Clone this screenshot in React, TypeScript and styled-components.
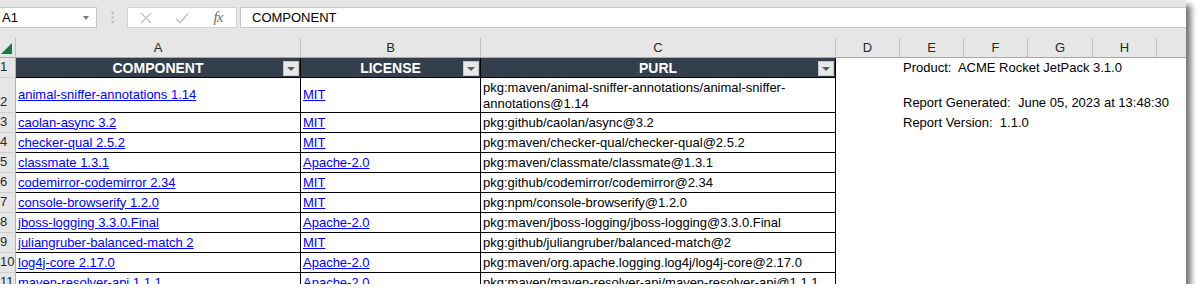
import styled, { createGlobalStyle } from "styled-components";

const GlobalStyle = createGlobalStyle`
  body {
    margin: 0;
    background: #fff;
    font-family: "Liberation Sans", Arial, sans-serif;
  }
`;

const Window = styled.div`
  width: 1186px;
  height: 284px;
  overflow: hidden;
  background: #fff;
  box-shadow: 5px 5px 6px rgba(0, 0, 0, 0.55);
  font-family: "Liberation Sans", Arial, sans-serif;
  font-size: 13px;
  color: #000;
`;

const FormulaBar = styled.div`
  display: flex;
  align-items: flex-start;
  height: 38px;
  box-sizing: border-box;
  padding-top: 7px;
  background: #e6e6e6;
`;

const NameBox = styled.div`
  display: flex;
  align-items: center;
  justify-content: space-between;
  box-sizing: border-box;
  width: 97px;
  height: 21px;
  padding: 0 7px 0 2px;
  background: #fff;
  border: 1px solid #c6c6c6;
  border-left: none;
`;

const DropArrow = styled.span`
  width: 0;
  height: 0;
  border-left: 3.5px solid transparent;
  border-right: 3.5px solid transparent;
  border-top: 4px solid #7a7a7a;
`;

const Grip = styled.div`
  display: flex;
  justify-content: center;
  align-items: center;
  width: 30px;
  height: 21px;
`;

const EditBox = styled.div`
  display: flex;
  box-sizing: border-box;
  width: 110px;
  height: 21px;
  background: #fff;
  border: 1px solid #d2d2d2;
`;

const EditSlot = styled.span`
  flex: 1;
  display: flex;
  align-items: center;
  justify-content: center;
`;

const Fx = styled.span`
  font-family: "Liberation Serif", "Times New Roman", serif;
  font-style: italic;
  font-size: 15px;
  color: #6e6e6e;
  letter-spacing: -1px;
`;

const FormulaInput = styled.div`
  flex: 1;
  display: flex;
  align-items: center;
  box-sizing: border-box;
  height: 21px;
  margin-left: 3px;
  padding-left: 11px;
  background: #fff;
  border: 1px solid #c6c6c6;
  border-right: none;
`;

const Sheet = styled.div`
  display: grid;
  grid-template-columns: 16px 285px 180px 355px 64px 64px 64px 65px 64px 64px;
  grid-template-rows: 20px 20px 35px repeat(9, 20px);
`;

const Corner = styled.div`
  display: flex;
  justify-content: flex-end;
  align-items: flex-end;
  padding: 0 3px 3px 0;
  background: #e6e6e6;
  border-right: 1px solid #c0c0c0;
  border-bottom: 1px solid #a8a8a8;
`;

const Triangle = styled.span`
  width: 0;
  height: 0;
  border-left: 11px solid transparent;
  border-bottom: 11px solid #217346;
`;

const ColHead = styled.div`
  display: flex;
  align-items: center;
  justify-content: center;
  background: #e6e6e6;
  color: #262626;
  border-right: 1px solid #c0c0c0;
  border-bottom: 1px solid #a8a8a8;
`;

const RowNum = styled.div`
  display: flex;
  align-items: flex-end;
  padding-bottom: 2px;
  line-height: 16px;
  background: #e6e6e6;
  color: #262626;
  border-right: 1px solid #b0b0b0;
  border-bottom: 1px solid #cfcfcf;
  overflow: hidden;
`;

const HeadCell = styled.div`
  display: grid;
  grid-template-columns: 17px 1fr 17px;
  align-items: center;
  background: #333f4c;
  color: #fff;
  font-weight: bold;
  font-size: 14px;
  border-right: 1px solid #000;
  border-bottom: 1px solid #000;
`;

const HeadLabel = styled.span`
  grid-column: 2;
  text-align: center;
  white-space: nowrap;
`;

const FilterButton = styled.span`
  grid-column: 3;
  align-self: end;
  display: flex;
  align-items: center;
  justify-content: center;
  box-sizing: border-box;
  width: 16px;
  height: 15px;
  margin-bottom: 1px;
  background: #e8e8e8;
  border: 1px solid #c4c4c4;

  &::after {
    content: "";
    border-left: 4px solid transparent;
    border-right: 4px solid transparent;
    border-top: 4px solid #5a5a5a;
  }
`;

const Cell = styled.div`
  display: flex;
  align-items: center;
  padding: 0 3px 0 2px;
  line-height: 16px;
  border-right: 1px solid #000;
  border-bottom: 1px solid #000;
  overflow: hidden;
  white-space: nowrap;
`;

const WrapCell = styled(Cell)`
  white-space: normal;
  padding-top: 1px;
`;

const Link = styled.a`
  color: #0000ff;
  text-decoration: underline;
`;

const Blank = styled.div``;

const Info = styled.div`
  display: flex;
  align-items: flex-end;
  padding: 0 0 2px 3px;
  line-height: 16px;
  white-space: pre;
  position: relative;
  z-index: 1;
`;

type Row = { name: string; license: string; purl: string };

const rows: Row[] = [
  {
    name: "animal-sniffer-annotations 1.14",
    license: "MIT",
    purl: "pkg:maven/animal-sniffer-annotations/animal-sniffer-annotations@1.14",
  },
  { name: "caolan-async 3.2", license: "MIT", purl: "pkg:github/caolan/async@3.2" },
  { name: "checker-qual 2.5.2", license: "MIT", purl: "pkg:maven/checker-qual/checker-qual@2.5.2" },
  { name: "classmate 1.3.1", license: "Apache-2.0", purl: "pkg:maven/classmate/classmate@1.3.1" },
  { name: "codemirror-codemirror 2.34", license: "MIT", purl: "pkg:github/codemirror/codemirror@2.34" },
  { name: "console-browserify 1.2.0", license: "MIT", purl: "pkg:npm/console-browserify@1.2.0" },
  {
    name: "jboss-logging 3.3.0.Final",
    license: "Apache-2.0",
    purl: "pkg:maven/jboss-logging/jboss-logging@3.3.0.Final",
  },
  {
    name: "juliangruber-balanced-match 2",
    license: "MIT",
    purl: "pkg:github/juliangruber/balanced-match@2",
  },
  {
    name: "log4j-core 2.17.0",
    license: "Apache-2.0",
    purl: "pkg:maven/org.apache.logging.log4j/log4j-core@2.17.0",
  },
  {
    name: "maven-resolver-api 1.1.1",
    license: "Apache-2.0",
    purl: "pkg:maven/maven-resolver-api/maven-resolver-api@1.1.1",
  },
];

// text that spills from column E over the empty columns to its right
const info: Record<number, string> = {
  1: "Product:  ACME Rocket JetPack 3.1.0",
  2: "Report Generated:  June 05, 2023 at 13:48:30",
  3: "Report Version:  1.1.0",
};

// column I is only partly in view, its letter falls outside the window
const letters = ["A", "B", "C", "D", "E", "F", "G", "H", ""];

function SideCells({ row }: { row: number }) {
  return (
    <>
      <Blank />
      {info[row] ? <Info>{info[row]}</Info> : <Blank />}
      <Blank />
      <Blank />
      <Blank />
      <Blank />
    </>
  );
}

export default function App() {
  return (
    <>
      <GlobalStyle />
      <Window>
        <FormulaBar>
          <NameBox>
            A1
            <DropArrow />
          </NameBox>
          <Grip>
            <svg width="3" height="11" viewBox="0 0 3 11">
              <rect x="0.5" y="0" width="2" height="2" fill="#b4b4b4" />
              <rect x="0.5" y="4.5" width="2" height="2" fill="#b4b4b4" />
              <rect x="0.5" y="9" width="2" height="2" fill="#b4b4b4" />
            </svg>
          </Grip>
          <EditBox>
            <EditSlot>
              <svg width="12" height="12" viewBox="0 0 12 12">
                <path d="M1 1 L11 11 M11 1 L1 11" stroke="#c4c4c4" strokeWidth="1.4" />
              </svg>
            </EditSlot>
            <EditSlot>
              <svg width="14" height="12" viewBox="0 0 14 12">
                <path d="M1 6.5 L5 10.5 L13 1.5" stroke="#c4c4c4" strokeWidth="1.6" fill="none" />
              </svg>
            </EditSlot>
            <EditSlot>
              <Fx>fx</Fx>
            </EditSlot>
          </EditBox>
          <FormulaInput>COMPONENT</FormulaInput>
        </FormulaBar>

        <Sheet>
          <Corner>
            <Triangle />
          </Corner>
          {letters.map((l, i) => (
            <ColHead key={i}>{l}</ColHead>
          ))}

          <RowNum>1</RowNum>
          {["COMPONENT", "LICENSE", "PURL"].map((h) => (
            <HeadCell key={h}>
              <HeadLabel>{h}</HeadLabel>
              <FilterButton />
            </HeadCell>
          ))}
          <SideCells row={1} />

          {rows.map((r, i) => (
            <>
              <RowNum key={`n${i}`}>{i + 2}</RowNum>
              <Cell key={`a${i}`}>
                <Link href="#">{r.name}</Link>
              </Cell>
              <Cell key={`b${i}`}>
                <Link href="#">{r.license}</Link>
              </Cell>
              <WrapCell key={`c${i}`}>{r.purl}</WrapCell>
              <SideCells key={`s${i}`} row={i + 2} />
            </>
          ))}
        </Sheet>
      </Window>
    </>
  );
}
